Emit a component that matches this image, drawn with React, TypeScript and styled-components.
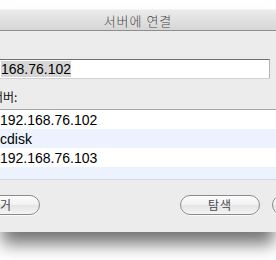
import React from 'react';
import styled, { createGlobalStyle } from 'styled-components';

const GlobalStyle = createGlobalStyle`
  html, body {
    margin: 0;
    padding: 0;
    background: #ffffff;
    overflow: hidden;
  }
  body {
    font-family: "Liberation Sans", "Noto Sans CJK KR", sans-serif;
  }
`;

const Page = styled.div`
  width: 276px;
  height: 260px;
  overflow: hidden;
`;

const Window = styled.div`
  margin-top: 9px;
  background: #ececec;
  box-shadow: 0 14px 16px -2px rgba(0, 0, 0, 0.55);
`;

const TitleBar = styled.div`
  display: flex;
  align-items: center;
  justify-content: center;
  background: linear-gradient(#ebebeb, #d6d6d6);
  border-top: 1px solid #f4f4f4;
  border-bottom: 1px solid #8e8e8e;
  box-sizing: border-box;
  height: 22px;
  color: #4a4a4a;
  font-size: 13px;
  font-family: "Noto Sans CJK KR", sans-serif;
  font-weight: 300;
  letter-spacing: 1px;
`;

const Body = styled.div`
  display: flex;
  flex-direction: column;
  padding: 28px 6px 17px 0;
`;

const Field = styled.div`
  height: 20px;
  box-sizing: border-box;
  margin-left: -4px;
  padding-left: 4px;
  display: flex;
  align-items: center;
  background: #ffffff;
  border: 1px solid #b4b4b4;
  border-top-color: #6f6f6f;
  border-bottom-color: #d2d2d2;
  font-size: 14px;
  color: #000;
`;

const Selected = styled.span`
  background: #d6d6d6;
  line-height: 16px;
`;

const Label = styled.div`
  margin: 10px 0 0 -8px;
  height: 16px;
  line-height: 16px;
  font-size: 12px;
  color: #111;
  font-family: "Noto Sans CJK KR", sans-serif;
`;

const List = styled.div`
  margin: 4px -10px 0 -4px;
  height: 69px;
  overflow: hidden;
  border-top: 1px solid #a8a8a8;
  border-bottom: 1px solid #d8d8d8;
  background: #ffffff;
`;

const Row = styled.div<{ $alt?: boolean }>`
  height: 19px;
  display: flex;
  align-items: center;
  padding-left: 4px;
  background: ${(p) => (p.$alt ? '#edf3fe' : '#ffffff')};
  font-size: 14px;
  color: #000;
`;

const Buttons = styled.div`
  margin-top: 15px;
  display: flex;
  align-items: center;
`;

const Spacer = styled.div`
  flex: 1;
`;

const Button = styled.button<{ $left?: number; $right?: number }>`
  width: 80px;
  height: 20px;
  flex: none;
  margin-left: ${(p) => p.$left ?? 0}px;
  margin-right: ${(p) => p.$right ?? 0}px;
  border-radius: 10px;
  border: 1px solid #8a8a8a;
  background: linear-gradient(#fdfdfd 0%, #f1f1f1 50%, #e4e4e4 51%, #f4f4f4 100%);
  box-shadow: 0 1px 0 rgba(255, 255, 255, 0.8);
  padding: 0;
  font-size: 12px;
  color: #4a4a4a;
  font-family: "Noto Sans CJK KR", sans-serif;
  letter-spacing: 1px;
  line-height: 18px;
`;

export default function App() {
  return (
    <>
      <GlobalStyle />
      <Page>
        <Window>
          <TitleBar>서버에 연결</TitleBar>
          <Body>
            <Field>
              <Selected>168.76.102</Selected>
            </Field>
            <Label>서버:</Label>
            <List>
              <Row>192.168.76.102</Row>
              <Row $alt>cdisk</Row>
              <Row>192.168.76.103</Row>
              <Row $alt />
            </List>
            <Buttons>
              <Button $left={-40}>제거</Button>
              <Spacer />
              <Button>탐색</Button>
              <Button $left={12} $right={-82}>연결</Button>
            </Buttons>
          </Body>
        </Window>
      </Page>
    </>
  );
}
